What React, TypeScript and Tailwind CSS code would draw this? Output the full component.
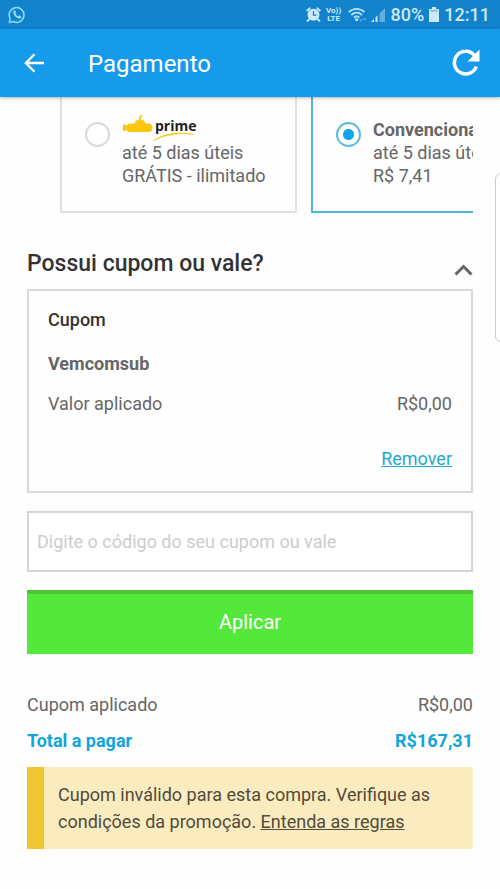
import { useState } from "react";
import type { ReactNode } from "react";

function WhatsAppIcon() {
    return (
        <svg width="18" height="18" viewBox="0 0 18 18" fill="none" aria-hidden="true">
            <path d="M1.2 16.6l1-3.9a7.4 7.4 0 1 1 2.9 2.8z" stroke="#8fdcf8" strokeWidth="1.5" strokeLinejoin="round" />
            <path
                d="M6 4.6c.5-.4 1.1-.3 1.3.2l.7 1.6c.2.5-.7 1-.5 1.4.6 1.1 1.3 1.8 2.4 2.3.5.2 1-1 1.5-.8l1.6.9c.6.3.2 1.6-.4 2-1.2.8-3.5 0-5.3-1.7C5.4 8.800 4.500 6.200 6 4.600z"
                fill="#8fdcf8"
            />
        </svg>
    );
}

function AlarmIcon() {
    return (
        <svg width="15" height="15" viewBox="0 0 15 15" aria-hidden="true">
            <circle cx="7.5" cy="7.8" r="6" fill="#cbe9fb" />
            <path d="M1.2 3.4L3.6 1.4M13.8 3.4L11.4 1.4M3 12.5L1.6 13.8M12 12.5L13.4 13.8" stroke="#cbe9fb" strokeWidth="2" strokeLinecap="round" />
            <path d="M7.5 4.3V8.2H10.5" stroke="#1283cb" strokeWidth="1.3" fill="none" />
        </svg>
    );
}

function WifiIcon() {
    return (
        <svg width="19" height="16" viewBox="0 0 19 16" fill="none" aria-hidden="true">
            <path d="M.8 5.2C5.2.8 12.1.8 16.5 5.2M3.3 8C6.5 5 10.8 5 14 8M5.9 10.6C7.7 9 9.6 9 11.4 10.6" stroke="#b5dff6" strokeWidth="1.8" />
            <circle cx="8.6" cy="12.6" r="1.6" fill="#b5dff6" />
            <path d="M13 15l-1.8-2.5h3.6zM16.8 10.5l-1.8 2.5h3.6z" fill="#55addf" />
        </svg>
    );
}

function SignalIcon() {
    return (
        <svg width="14" height="14" viewBox="0 0 14 14" aria-hidden="true">
            <path d="M0 14L3 11v3z" fill="#cbe9fb" />
            <path d="M4.5 9.5L6.5 7.5V14h-2z" fill="#cbe9fb" />
            <path d="M8.5 5.5L14 0v14H8.5z" fill="#60afe0" />
        </svg>
    );
}

function BatteryIcon() {
    return (
        <svg width="10" height="15" viewBox="0 0 10 15" aria-hidden="true">
            <path d="M3 0h4v2h3v13H0V2h3z" fill="#cbe9fb" />
            <path d="M1.2 3.2h7.6v1.2H1.2z" fill="#5fb0e0" />
        </svg>
    );
}

function PrimeLogo() {
    return (
        <svg width="76" height="28" viewBox="0 0 76 28" role="img" aria-label="Submarino prime">
            <rect x="4" y="9.5" width="26.5" height="8.5" rx="4.2" fill="#fcc60a" />
            <path d="M1 10.5h1.6l3 2v2.600l-3 2H1z" fill="#fcc60a" />
            <path d="M11 10.500c1.500-.4 2-1.200 2.200-2.500.2-1.200.8-1.800 2-1.800h5.600c1.200 0 1.800.6 2 1.800.2 1.300.8 2.100 2.300 2.500z" fill="#fcc60a" />
            <path d="M18 7V3.500C18 2.200 18.700 1.700 20.500 1.900" stroke="#fcc60a" strokeWidth="1.700" fill="none" />
            <path d="M31.500 26.500C42 19.500 56 17.500 71.500 20.300C56 18.800 43 20.600 31.500 26.500z" stroke="#fcc60a" strokeWidth="0.6" fill="#fcc60a" />
            <text x="33" y="17" fill="#222222" className="font-['Open_Sans',sans-serif] text-[14px] font-bold">
                prime
            </text>
        </svg>
    );
}

function StatusBar() {
    return (
        <div className="flex h-[29px] items-center justify-between bg-[#1283cb] pl-2 pr-[10px] text-[#cbe9fb]">
            <WhatsAppIcon />
            <div className="flex items-center">
                <AlarmIcon />
                <div className="ml-[5px] flex w-[16px] flex-col items-center text-[8px] leading-[8px] font-bold">
                    <span>Vo))</span>
                    <span>LTE</span>
                </div>
                <span className="ml-[6px]">
                    <WifiIcon />
                </span>
                <span className="ml-1">
                    <SignalIcon />
                </span>
                <span className="ml-[6px] text-[18px] leading-[22px] font-medium">80%</span>
                <span className="ml-[5px]">
                    <BatteryIcon />
                </span>
                <span className="ml-[5px] text-[18px] leading-[22px] font-medium">12:11</span>
            </div>
        </div>
    );
}

interface ShippingCardProps {
    value: string;
    selected: boolean;
    onSelect: (value: string) => void;
    title: ReactNode;
    deadline: string;
    price: string;
}

function ShippingCard({ value, selected, onSelect, title, deadline, price }: ShippingCardProps) {
    return (
        <label
            className={`flex w-[237px] shrink-0 items-start border-2 border-t-0 pt-[21px] pl-[23px] pb-6 ${
                selected ? "border-[#4db6d9]" : "border-[#e0e0e0]"
            }`}
        >
            <input
                type="radio"
                name="shipping"
                value={value}
                checked={selected}
                onChange={() => onSelect(value)}
                className="mt-1 h-[25px] w-[25px] shrink-0 appearance-none rounded-full border-2 border-[#d9d9d9] bg-white checked:border-[#5bbcd8] checked:bg-[radial-gradient(circle,#0aa5ea_5px,transparent_6px)]"
            />
            <span className="ml-3 flex flex-col whitespace-nowrap leading-[23px]">
                {title}
                <span>{deadline}</span>
                <span>{price}</span>
            </span>
        </label>
    );
}

export default function App() {
    const [shipping, setShipping] = useState("convencional");
    const [code, setCode] = useState("");
    const [open, setOpen] = useState(true);
    const [applied, setApplied] = useState(true);

    return (
        <div className="relative min-h-screen overflow-x-hidden bg-[#fefefe] font-[Roboto,sans-serif] text-[18px] leading-[22px] text-[#666666]">
            <StatusBar />
            <header className="relative flex h-[68px] items-center bg-[#169beb] pl-6 pr-5 text-white shadow-[0_1px_3px_rgba(0,0,0,0.3)]">
                <button type="button" aria-label="Voltar">
                    <svg width="21" height="20" viewBox="0 0 21 20" fill="none" aria-hidden="true">
                        <path d="M20 10H2M10.5 1.2L1.8 10l8.700 8.800" stroke="currentColor" strokeWidth="2.3" />
                    </svg>
                </button>
                <h1 className="ml-[43px] flex-1 pt-[2px] text-[24px] leading-[30px]">Pagamento</h1>
                <button type="button" aria-label="Atualizar">
                    <svg width="28" height="28" viewBox="0 0 28 28" fill="none" aria-hidden="true">
                        <path d="M24.3 17.5A11.3 11.3 0 1 1 22.5 6.5" stroke="currentColor" strokeWidth="3.5" />
                        <path d="M27.5 0.5V12.5H15.5z" fill="currentColor" />
                    </svg>
                </button>
            </header>

            <main className="px-[27px] pb-10">
                <div className="ml-[33px] flex gap-[14px] overflow-hidden">
                    <ShippingCard
                        value="prime"
                        selected={shipping === "prime"}
                        onSelect={setShipping}
                        title={
                            <span className="-mt-1 flex h-[27px]">
                                <PrimeLogo />
                            </span>
                        }
                        deadline="até 5 dias úteis"
                        price="GRÁTIS - ilimitado"
                    />
                    <ShippingCard
                        value="convencional"
                        selected={shipping === "convencional"}
                        onSelect={setShipping}
                        title={<span className="font-bold">Convencional</span>}
                        deadline="até 5 dias úteis"
                        price="R$ 7,41"
                    />
                </div>

                <section>
                    <div className="mt-9 flex h-10 items-start justify-between">
                        <h2 className="text-[23px] leading-[30px] font-medium text-[#333333]">Possui cupom ou vale?</h2>
                        <button type="button" aria-label="Mostrar cupom" aria-expanded={open} onClick={() => setOpen(!open)} className="mt-[15px]">
                            <svg width="19" height="12" viewBox="0 0 19 12" fill="none" aria-hidden="true">
                                <path d="M1.5 10.5L9.5 2.5L17.5 10.5" stroke="#666666" strokeWidth="3" />
                            </svg>
                        </button>
                    </div>

                    {open && applied && (
                        <div className="mb-[18px] border-2 border-[#d9d9d9] px-[19px] pt-[18px] pb-[21px]">
                            <h3 className="font-medium text-[#333333]">Cupom</h3>
                            <p className="mt-[22px] font-bold">Vemcomsub</p>
                            <div className="mt-[18px] flex justify-between">
                                <span>Valor aplicado</span>
                                <span>R$0,00</span>
                            </div>
                            <div className="mt-[33px] flex justify-end">
                                <button type="button" onClick={() => setApplied(false)} className="text-[#1fa9cf] underline">
                                    Remover
                                </button>
                            </div>
                        </div>
                    )}

                    {open && (
                        <form onSubmit={(e) => e.preventDefault()}>
                            <input
                                type="text"
                                aria-label="Código do cupom ou vale"
                                placeholder="Digite o código do seu cupom ou vale"
                                value={code}
                                onChange={(e) => setCode(e.target.value)}
                                className="block h-[61px] w-full border-2 border-[#d5d5d5] bg-white px-2 placeholder:text-[#cccccc]"
                            />
                            <button type="submit" className="mt-[18px] h-[64px] w-full bg-[#54e83a] text-[20px] text-white shadow-[inset_0_4px_0_#4cc535]">
                                Aplicar
                            </button>
                        </form>
                    )}
                </section>

                <div className="mt-10 flex justify-between">
                    <span>Cupom aplicado</span>
                    <span>R$0,00</span>
                </div>
                <div className="mt-[14px] flex justify-between font-bold text-[#12a5dc]">
                    <span>Total a pagar</span>
                    <span>R$167,31</span>
                </div>

                <div role="alert" className="mt-[15px] border-l-[17px] border-[#efc532] bg-[#fbecc0] py-[14px] pl-[14px] pr-8 leading-[27px] text-[#514b3b]">
                    Cupom inválido para esta compra. Verifique as condições da promoção.{" "}
                    <a href="#regras" className="underline">
                        Entenda as regras
                    </a>
                </div>
            </main>

            {/* edge panel handle, partly off screen */}
            <div className="absolute top-[173px] -right-2 h-[169px] w-[13px] rounded-l-md border border-[#cccccc] bg-white" />
        </div>
    );
}
